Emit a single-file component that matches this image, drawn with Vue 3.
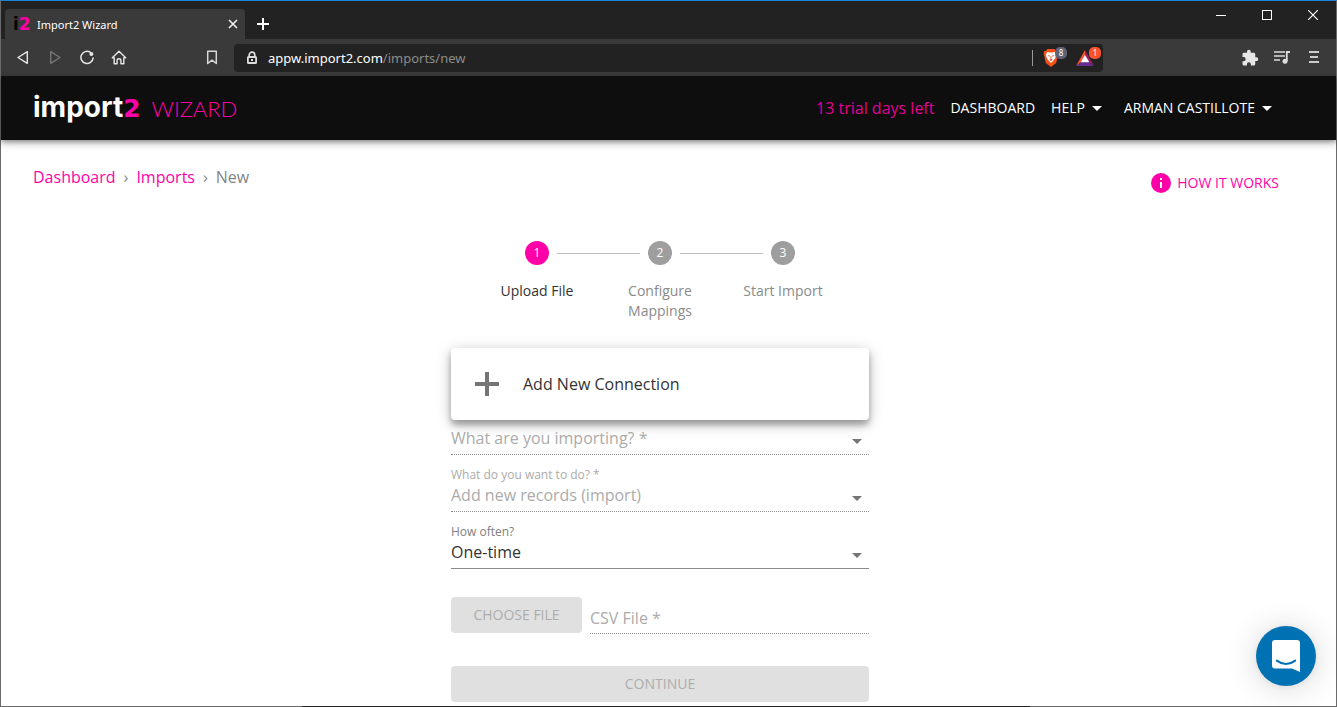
<script setup>
import { ref } from 'vue'

const address = ref('appw.import2.com/imports/new')
const steps = [
  { label: 'Upload File', active: true },
  { label: 'Configure Mappings', active: false },
  { label: 'Start Import', active: false }
]
const importing = ref('')
const action = ref('add')
const frequency = ref('once')
const csvFile = ref('')
</script>

<template>
  <div class="window">
    <div class="tabstrip">
      <div class="tab">
        <span class="favicon" aria-hidden="true">i<b>2</b></span>
        <span class="tab-title">Import2 Wizard</span>
        <button class="tab-close" aria-label="Close tab">
          <svg width="10" height="10" viewBox="0 0 10 10"><path d="M1 1L9 9M9 1L1 9" stroke="#f0f0f0" stroke-width="1.6" /></svg>
        </button>
      </div>
      <button class="new-tab" aria-label="New tab">
        <svg width="12" height="12" viewBox="0 0 12 12"><path d="M6 0V12M0 6H12" stroke="#fff" stroke-width="2" /></svg>
      </button>
      <div class="window-controls">
        <button aria-label="Minimize"><svg width="10" height="10" viewBox="0 0 10 10"><path d="M0 5.5H10" stroke="#fff" /></svg></button>
        <button aria-label="Maximize"><svg width="10" height="10" viewBox="0 0 10 10"><rect x=".5" y=".5" width="9" height="9" fill="none" stroke="#fff" /></svg></button>
        <button aria-label="Close"><svg width="10" height="10" viewBox="0 0 10 10"><path d="M0 0L10 10M10 0L0 10" stroke="#fff" stroke-width="1.2" /></svg></button>
      </div>
    </div>

    <div class="toolbar">
      <div class="nav-buttons">
        <button aria-label="Back"><svg width="16" height="16" viewBox="0 0 16 16"><path d="M12.3 1.7V13.3L3 7.5Z" fill="none" stroke="#e6e6e6" stroke-width="1.4" stroke-linejoin="round" /></svg></button>
        <button aria-label="Forward"><svg width="16" height="16" viewBox="0 0 16 16"><path d="M3.7 1.7V13.3L13 7.5Z" fill="none" stroke="#777" stroke-width="1.4" stroke-linejoin="round" /></svg></button>
        <button aria-label="Reload"><svg width="16" height="16" viewBox="0 0 16 16"><path d="M11.2 2.2A6.1 6.1 0 1 0 14.1 8.1" fill="none" stroke="#e6e6e6" stroke-width="1.5" stroke-linecap="round" /><circle cx="12.4" cy="4" r="2" fill="#e6e6e6" /></svg></button>
        <button aria-label="Home"><svg width="16" height="16" viewBox="0 0 16 16"><path d="M1.3 7.7L8 1.2L14.7 7.7H12.8V13.7H9.9V10Q9.9 8.7 8 8.7Q6.1 8.7 6.1 10V13.7H3.2V7.7Z" fill="none" stroke="#e6e6e6" stroke-width="1.4" stroke-linejoin="round" /></svg></button>
      </div>
      <button class="bookmark" aria-label="Bookmark"><svg width="16" height="16" viewBox="0 0 16 16"><path d="M3.7 1.2H12.3V13.5L8 10.2L3.7 13.5Z" fill="none" stroke="#d8d8d8" stroke-width="1.5" stroke-linejoin="round" /></svg></button>
      <div class="address">
        <svg class="lock" width="12" height="14" viewBox="0 0 12 14"><path d="M3.2 6V4A2.8 2.8 0 0 1 8.8 4V6" fill="none" stroke="#ddd" stroke-width="1.7" /><rect x="1.9" y="6" width="8.2" height="6" fill="none" stroke="#ddd" stroke-width="1.8" rx=".6" /><rect x="5" y="8" width="2" height="2" fill="#ddd" /></svg>
        <a class="url" :href="'#' + address">appw.import2.com<span>/imports/new</span></a>
        <i class="divider"></i>
        <button class="shield" aria-label="Shields">
          <svg width="16" height="18" viewBox="0 0 16 18"><path d="M4.5 0H11.5L13 1.7L14.8 2L15.5 4.8L14.6 7.5L13.2 14L8 18L2.8 14L1.4 7.5L.5 4.8L1.2 2L3 1.7Z" fill="#f4511a" /><path d="M4.2 3L6.6 3.4H9.4L11.8 3L13.2 5.8L12.1 9.6L10 12L8 14L6 12L3.9 9.6L2.8 5.8Z" fill="#fff" /><path d="M4.3 6L7 6.8L6.2 7.8ZM11.7 6L9 6.8L9.8 7.8ZM7.6 7H8.4V10.2H7.6ZM6.3 10.6L8 10L9.7 10.6L8 12Z" fill="#d9441b" /></svg>
          <span class="badge">8</span>
        </button>
        <button class="rewards" aria-label="Rewards">
          <svg width="18" height="16" viewBox="0 0 18 16"><path d="M9 0L0 16L9 9Z" fill="#ff5029" /><path d="M9 0L18 16L9 9Z" fill="#9e1f63" /><path d="M0 16L9 9.5L18 16Z" fill="#662d91" /><path d="M9 5L4.7 12.2H13.3Z" fill="#fff" /></svg>
          <span class="badge hot">1</span>
        </button>
      </div>
      <div class="menu-buttons">
        <button aria-label="Extensions"><svg width="18" height="18" viewBox="0 0 24 24"><path fill="#e6e6e6" d="M20.5 11H19V7c0-1.1-.9-2-2-2h-4V3.500a2.500 2.500 0 0 0-5 0V5H4c-1.100 0-2 .9-2 2v3.800h1.500a2.700 2.700 0 0 1 0 5.400H2V20c0 1.100.9 2 2 2h3.800v-1.500a2.700 2.700 0 0 1 5.400 0V22H17c1.100 0 2-.9 2-2v-4h1.500a2.500 2.500 0 0 0 0-5z" /></svg></button>
        <button aria-label="Media"><svg width="18" height="18" viewBox="0 0 18 18"><path d="M1 3H12M1 7H12M1 11H7" stroke="#ddd" stroke-width="1.600" /><path d="M17 3H13.800V12" fill="none" stroke="#ddd" stroke-width="1.800" /><circle cx="12" cy="12.300" r="2.500" fill="#ddd" /></svg></button>
        <button aria-label="Menu"><svg width="18" height="18" viewBox="0 0 18 18"><path d="M4 3H14M5 8H13M4 13H14" stroke="#ccc" stroke-width="2" /></svg></button>
      </div>
    </div>

    <header class="app-header">
      <a class="brand" href="#home"><span class="logo">import<b>2</b></span><span class="product">WIZARD</span></a>
      <nav class="app-nav">
        <span class="trial">13 trial days left</span>
        <a href="#dashboard">DASHBOARD</a>
        <button class="help">HELP <i class="caret"></i></button>
        <button>ARMAN CASTILLOTE <i class="caret"></i></button>
      </nav>
    </header>

    <main class="page">
      <div class="page-top">
        <nav class="crumbs" aria-label="Breadcrumb">
          <a href="#dashboard">Dashboard</a><span class="sep">›</span><a href="#imports">Imports</a><span class="sep">›</span><span>New</span>
        </nav>
        <button class="how">
          <svg width="20" height="20" viewBox="0 0 20 20"><circle cx="10" cy="10" r="10" fill="#ff00a8" /><path d="M9 5H11V7H9ZM9 9H11V15H9Z" fill="#fff" /></svg>
          HOW IT WORKS
        </button>
      </div>

      <ol class="stepper">
        <li v-for="(step, i) in steps" :key="step.label" :class="{ active: step.active }">
          <div class="step-head"><i></i><span class="dot">{{ i + 1 }}</span><i></i></div>
          <span class="step-label">{{ step.label }}</span>
        </li>
      </ol>

      <form class="form" @submit.prevent>
        <button type="button" class="connection">
          <svg width="24" height="24" viewBox="0 0 24 24"><path d="M12 0V24M0 12H24" stroke="#757575" stroke-width="4" /></svg>
          Add New Connection
        </button>

        <div class="field first off">
          <select id="importing" v-model="importing" aria-label="What are you importing?" disabled>
            <option value="">What are you importing? *</option>
          </select>
          <i class="caret"></i>
        </div>
        <div class="field off">
          <label for="action">What do you want to do? *</label>
          <select id="action" v-model="action" disabled>
            <option value="add">Add new records (import)</option>
          </select>
          <i class="caret"></i>
        </div>
        <div class="field">
          <label for="frequency">How often?</label>
          <select id="frequency" v-model="frequency">
            <option value="once">One-time</option>
          </select>
          <i class="caret"></i>
        </div>

        <div class="file-row">
          <button type="button" class="flat choose" disabled>CHOOSE FILE</button>
          <input v-model="csvFile" type="text" placeholder="CSV File *" aria-label="CSV File" disabled />
        </div>
        <button type="submit" class="flat" disabled>CONTINUE</button>
      </form>
    </main>

    <button class="chat" aria-label="Open chat">
      <svg width="28" height="32" viewBox="0 0 28 32"><path d="M3 0H25Q28 0 28 3V32Q24 30 20 28.500H3Q0 28.500 0 25.500V3Q0 0 3 0Z" fill="#fff" /><path d="M4.800 20.600Q14 27.400 23.200 20.600" fill="none" stroke="#0071b2" stroke-width="2" stroke-linecap="round" /></svg>
    </button>
    <i class="edge" aria-hidden="true"></i>
  </div>
</template>

<style>
body { margin: 0; background: #fff; }
</style>

<style scoped>
* { box-sizing: border-box; }
button { font: inherit; color: inherit; background: none; border: 0; padding: 0; display: flex; align-items: center; justify-content: center; }
a { text-decoration: none; color: inherit; }
svg { display: block; flex: none; }

.window {
  position: relative;
  min-height: 100vh;
  border: 1px solid #6b6b6b;
  border-top-color: #1b83d8;
  background: #fff;
  font-family: "Open Sans", "Noto Sans", sans-serif;
  font-weight: 400;
  font-size: 16px;
  color: #333;
}
.edge { position: absolute; bottom: -1px; left: 301px; right: 306px; height: 1px; background: #222; }

.tabstrip { display: flex; height: 38px; background: #222; align-items: flex-end; }
.tab { display: flex; align-items: center; width: 240px; height: 30px; margin-left: 4px; padding: 0 7px 0 8px; background: #3a3a3a; border-radius: 4px 4px 0 0; color: #fff; font-size: 11px; }
.favicon { width: 16px; font: bold 17px/16px "DejaVu Sans", sans-serif; color: #000; white-space: nowrap; display: flex; }
.favicon b { color: #ff00a8; }
.tab-title { flex: 1; margin-left: 8px; font-family: "Noto Sans", sans-serif; }
.new-tab { width: 36px; height: 30px; }
.window-controls { display: flex; margin-left: auto; align-self: flex-start; }
.window-controls button { width: 46px; height: 28px; }

.toolbar { display: flex; align-items: center; height: 37px; padding-right: 6px; background: #3a3a3a; }
.nav-buttons { display: flex; padding-left: 6px; }
.nav-buttons button, .menu-buttons button { width: 32px; height: 28px; }
.bookmark { width: 32px; height: 28px; margin-left: 61px; }
.address { display: flex; align-items: center; flex: 1; height: 28px; margin-left: 6px; margin-right: 131px; padding: 0 2px 0 12px; border-radius: 4px; background: #222; font: 400 13px "Noto Sans", sans-serif; color: #fff; }
.url { flex: 1; margin-left: 10px; }
.url span { color: #8c8c8c; }
.divider { width: 1px; height: 16px; background: #999; margin-right: 10px; }
.shield, .rewards { position: relative; width: 33px; height: 24px; justify-content: flex-start; }
.rewards { width: 25px; }
.badge { position: absolute; left: 12px; top: 1px; width: 12px; height: 12px; border-radius: 5px; background: #5f6375; color: #fff; font-size: 8px; line-height: 12px; text-align: center; }
.badge.hot { left: 13px; background: #fb542b; }
.menu-buttons { display: flex; }

.app-header { position: relative; display: flex; align-items: center; justify-content: space-between; height: 64px; padding: 0 64px 0 32px; background: #0e0e0e; box-shadow: 0 2px 4px rgba(0, 0, 0, .3), 0 4px 8px rgba(0, 0, 0, .2); }
.brand { display: flex; align-items: baseline; gap: 11px; line-height: 32px; }
.logo { font-family: Inter, sans-serif; font-weight: 700; font-size: 28px; color: #fff; }
.logo b, .product { color: #ff00a8; }
.logo b { font-family: "DejaVu Sans", sans-serif; font-size: 25px; line-height: 24px; }
.product { font-family: Lato, sans-serif; font-size: 22px; font-weight: 300; }
.app-nav { display: flex; align-items: center; gap: 16px; color: #fff; font-size: 14px; font-weight: 500; line-height: 24px; }
.trial { color: #e00095; font-size: 16px; font-weight: 400; }
.caret { flex: none; width: 0; height: 0; border: 5px solid transparent; border-top-color: currentColor; border-bottom: 0; }
.app-nav .caret { margin-left: 7px; }
.help { margin-right: 6px; }

.page { padding: 24px 17px 4px 0; }
.page-top { display: flex; justify-content: space-between; align-items: flex-start; padding: 0 40px 0 32px; height: 77px; }
.crumbs { display: flex; color: #858585; line-height: 26px; }
.crumbs a { color: #ff00a8; }
.sep { margin: 0 8px; }
.how { gap: 6px; margin-top: 7px; height: 24px; color: #ff00a8; font-size: 14px; line-height: 18px; }

.stepper { display: flex; width: 100%; max-width: 369px; height: 107px; margin: 0 auto; padding: 0; list-style: none; }
.stepper li { flex: 1; color: #8a8a8a; font-size: 14px; line-height: 20px; text-align: center; }
.stepper li.active { color: #333; }
.step-head { display: flex; align-items: center; gap: 8px; }
.step-head i { flex: 1; height: 1px; background: #bdbdbd; }
.stepper li:first-child i:first-child, .stepper li:last-child i:last-child { background: none; }
.dot { width: 24px; height: 24px; border-radius: 50%; background: #9e9e9e; color: #fff; font-size: 12px; font-weight: 500; line-height: 24px; }
.active .dot { background: #ff00a8; }
.step-label { display: block; width: 80px; margin: 16px auto 0; }

.form { display: flex; flex-direction: column; width: 100%; max-width: 418px; margin: 0 auto; }
.connection { height: 72px; padding: 0 24px; gap: 24px; justify-content: flex-start; border-radius: 4px; background: #fff; box-shadow: 0 5px 6px rgba(0, 0, 0, .3), 0 3px 16px rgba(0, 0, 0, .22); }
.field { position: relative; display: flex; flex-direction: column; justify-content: flex-end; height: 57px; border-bottom: 1px solid #8b8b8b; padding-bottom: 4px; }
.field.first { height: 35px; }
.off { border-bottom-style: dotted; }
.field label { font-size: 12px; line-height: 16px; color: #808080; }
.field select { appearance: none; width: 100%; height: 24px; padding: 0; border: 0; background: none; font: inherit; line-height: 24px; color: #333; opacity: 1; }
.off label, .off select { color: #ababab; }
.field .caret { position: absolute; right: 7px; bottom: 10px; color: #757575; }
.file-row { display: flex; gap: 8px; height: 37px; margin: 28px 0 32px; align-items: flex-start; }
.file-row input { flex: 1; min-width: 0; height: 37px; padding: 6px 0 0; border: 0; border-bottom: 1px dotted #8b8b8b; border-radius: 0; background: none; font: inherit; color: #ababab; }
.file-row input::placeholder { color: #ababab; opacity: 1; }
.flat { height: 36px; border-radius: 4px; background: #e0e0e0; color: #adadad; font-size: 14px; line-height: 18px; }
.choose { width: 131px; }

.chat { position: absolute; right: 20px; bottom: 20px; width: 60px; height: 60px; border-radius: 50%; background: #0071b2; box-shadow: 0 1px 6px rgba(0, 0, 0, .06), 0 2px 32px rgba(0, 0, 0, .16); }
</style>
